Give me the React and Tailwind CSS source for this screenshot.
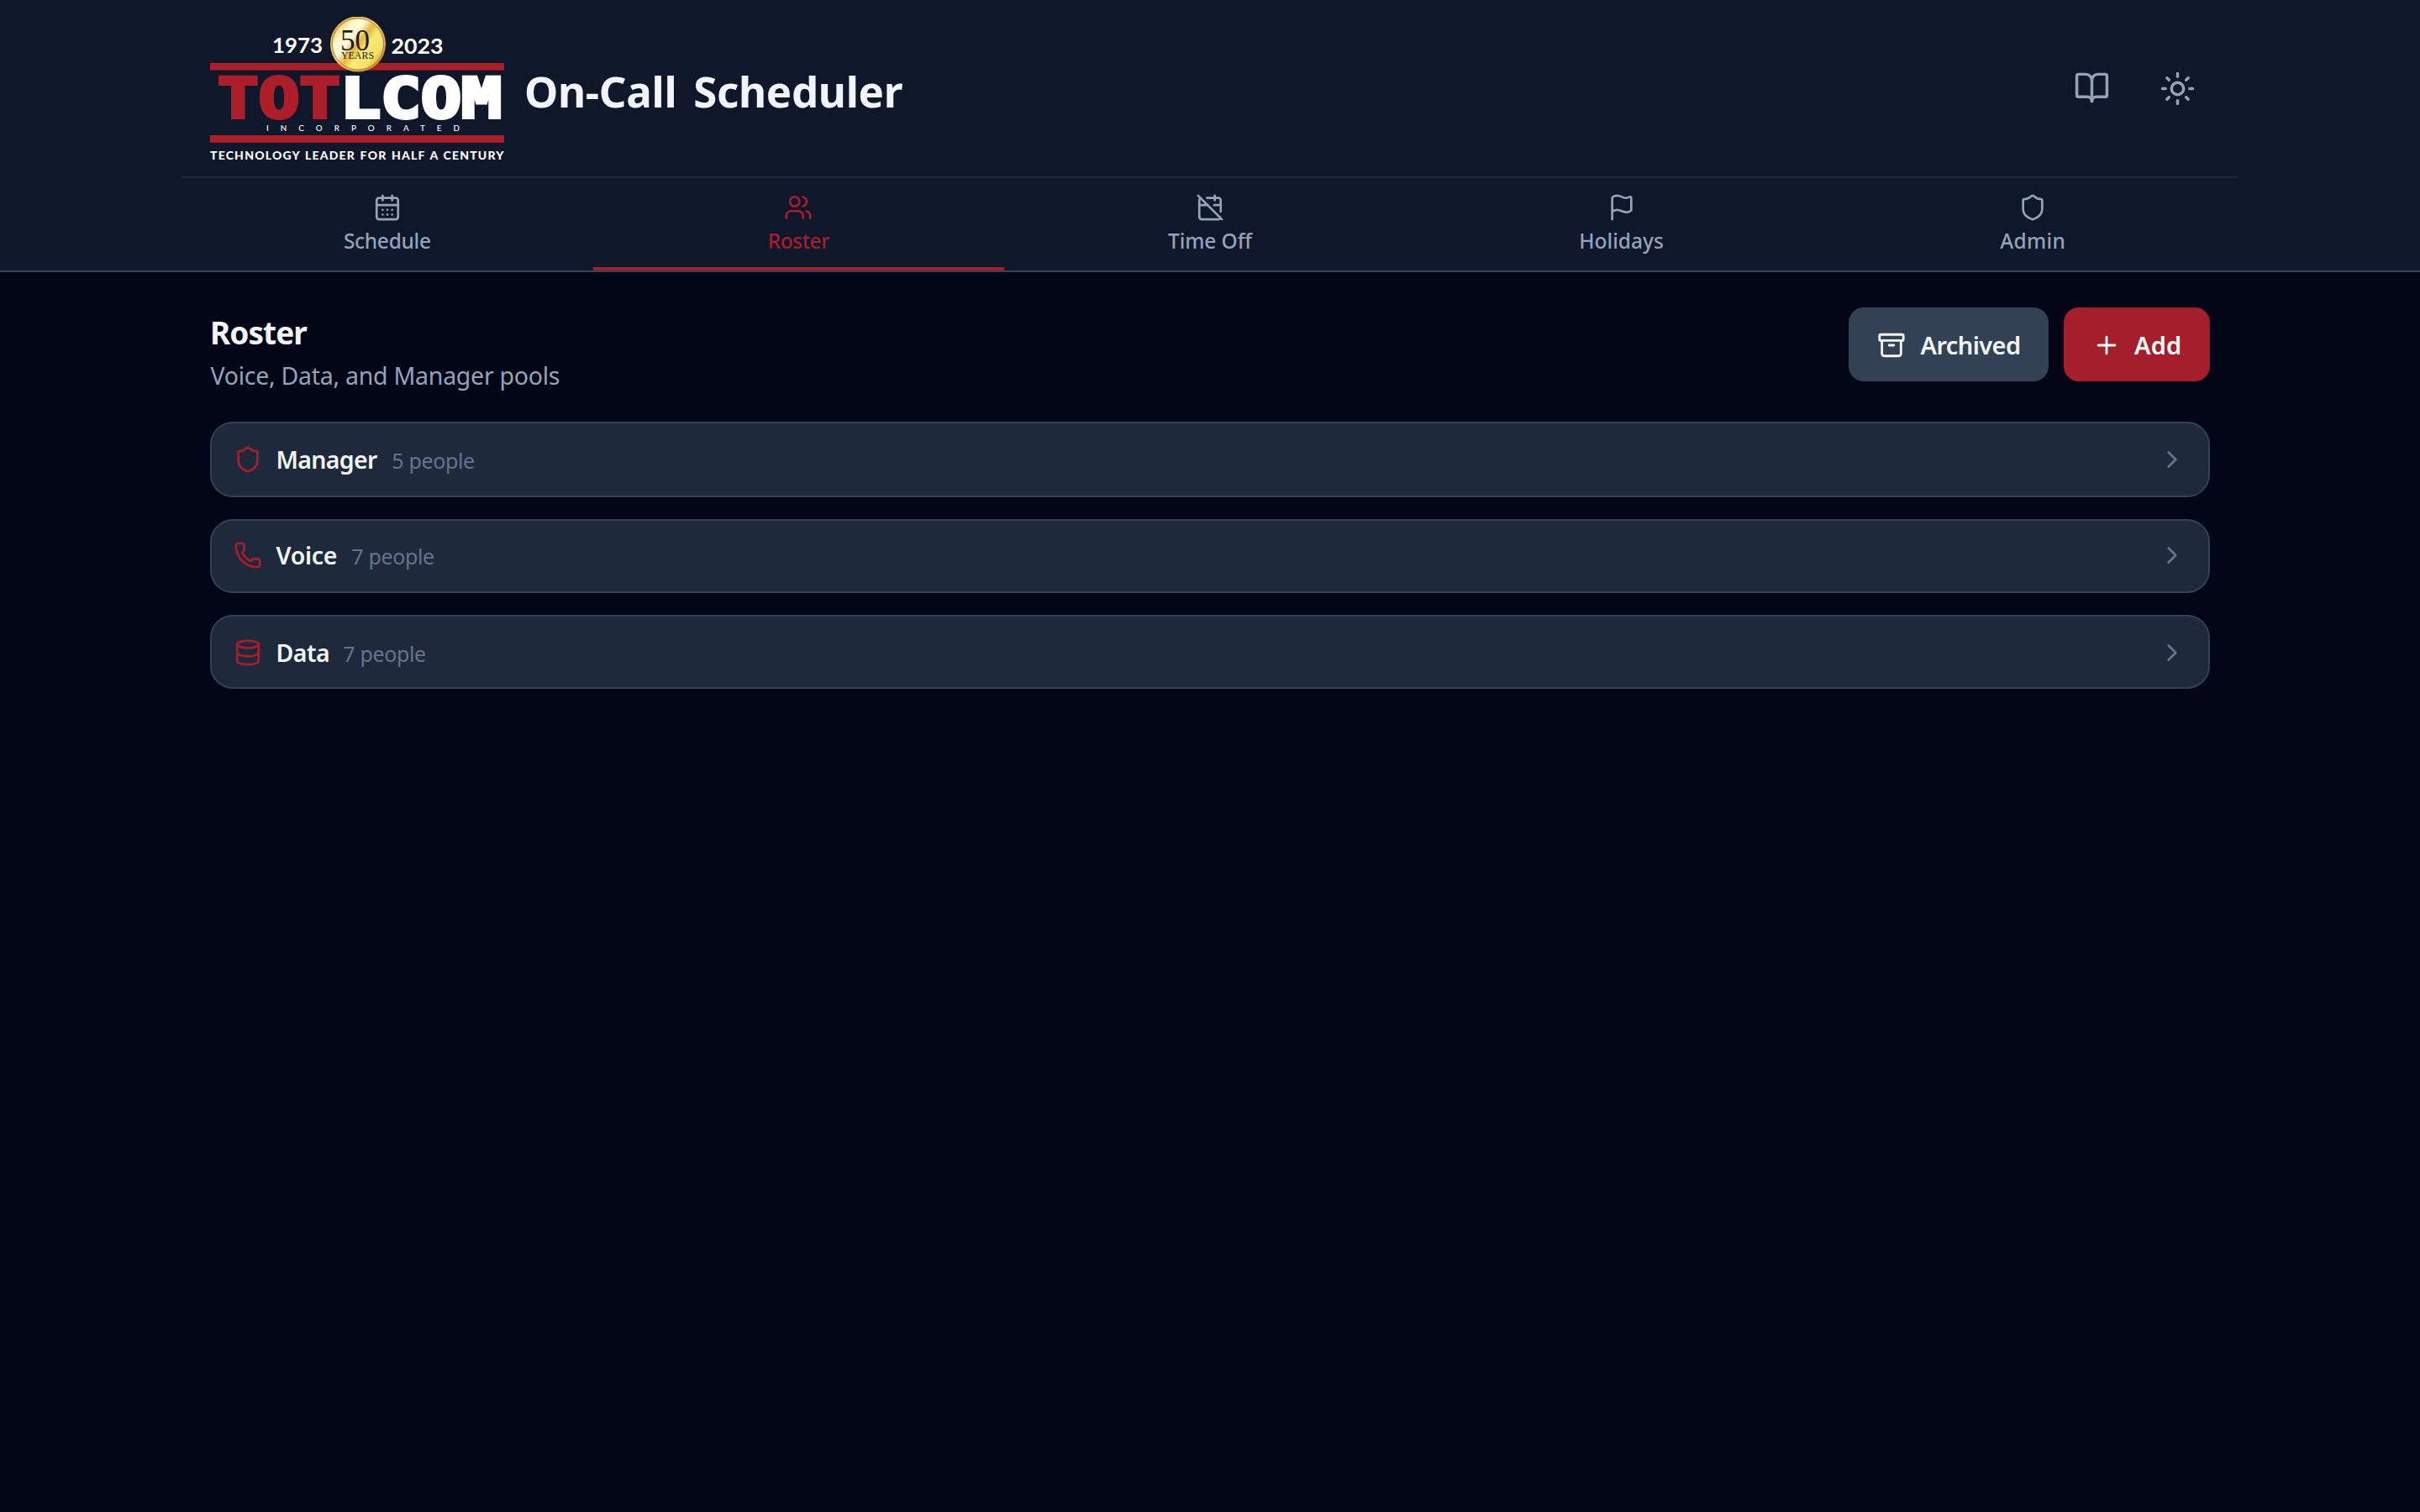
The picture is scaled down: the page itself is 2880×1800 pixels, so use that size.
import React from "react";
import {
  Archive,
  BookOpen,
  CalendarDays,
  CalendarOff,
  ChevronRight,
  Database,
  Flag,
  Phone,
  Plus,
  Shield,
  Sun,
  Users,
} from "lucide-react";

const tabs = [
  { label: "Schedule", icon: CalendarDays, tracking: "tracking-[-0.3px]" },
  { label: "Roster", icon: Users, tracking: "tracking-[-0.45px]", active: true },
  { label: "Time Off", icon: CalendarOff, tracking: "tracking-[-0.1px]" },
  { label: "Holidays", icon: Flag, tracking: "tracking-[0px]" },
  { label: "Admin", icon: Shield, tracking: "tracking-[0.3px]" },
];

const pools = [
  { name: "Manager", count: 5, icon: Shield, box: "h-[90px]", gap: "gap-[17.5px]", tracking: "tracking-[-0.66px]" },
  { name: "Voice", count: 7, icon: Phone, box: "h-[88px] pb-[2px]", gap: "gap-[17px]", tracking: "tracking-[-0.25px]" },
  { name: "Data", count: 7, icon: Database, box: "h-[88px] pt-[2px]", gap: "gap-4", tracking: "tracking-[-0.5px]" },
];

function Logo() {
  return (
    <svg viewBox="0 0 350 174" className="h-[174px] w-[350px] shrink-0" role="img" aria-label="Totlcom Incorporated">
      <defs>
        <linearGradient id="coin" x1="0" y1="0.1" x2="1" y2="0.9">
          <stop offset="0" stopColor="#e9b93c" />
          <stop offset="0.22" stopColor="#fff6c4" />
          <stop offset="0.36" stopColor="#fffbe0" />
          <stop offset="0.5" stopColor="#e3b740" />
          <stop offset="0.62" stopColor="#f8ea72" />
          <stop offset="0.8" stopColor="#f3e26a" />
          <stop offset="1" stopColor="#c98f22" />
        </linearGradient>
        <linearGradient id="rim" x1="0" y1="0" x2="1" y2="1">
          <stop offset="0" stopColor="#d99f2b" />
          <stop offset="0.45" stopColor="#f4d774" />
          <stop offset="1" stopColor="#b87d1c" />
        </linearGradient>
      </defs>
      <rect x="0" y="55" width="350" height="8.6" fill="#ac1f28" />
      <rect x="0" y="141" width="350" height="8.8" fill="#ac1f28" />
      <circle cx="176" cy="32.5" r="33" fill="url(#rim)" />
      <circle cx="176" cy="32.5" r="30.6" fill="url(#coin)" stroke="#a8741f" strokeWidth="0.9" />
      <g fontFamily="Lato, 'Liberation Sans', sans-serif" fill="#ffffff">
        <text x="74" y="42.5" fontSize="25.5" fontWeight="700" textLength="60" lengthAdjust="spacingAndGlyphs">1973</text>
        <text x="215.5" y="43.5" fontSize="25.5" fontWeight="700" textLength="62" lengthAdjust="spacingAndGlyphs">2023</text>
        <text x="67" y="135.5" fontSize="9.8" fontWeight="500" textLength="230">INCORPORATED</text>
        <text x="0" y="170" fontSize="14" fontWeight="900" textLength="349.5" wordSpacing="1">
          TECHNOLOGY LEADER FOR HALF A CENTURY
        </text>
      </g>
      <g fontFamily="'Liberation Serif', serif" fill="#1d1c14">
        <text x="155" y="39.5" fontSize="35" textLength="35" lengthAdjust="spacingAndGlyphs">50</text>
        <text x="156" y="50" fontSize="13.5" textLength="39" lengthAdjust="spacingAndGlyphs">YEARS</text>
      </g>
      <g
        fontFamily="'DejaVu Sans Mono', monospace"
        fontWeight="700"
        fontSize="65"
        strokeWidth="4"
        strokeLinejoin="miter"
      >
        <text x="9" y="120" fill="#ac1f28" stroke="#ac1f28" textLength="146" lengthAdjust="spacingAndGlyphs">TOT</text>
        <text x="155" y="120" fill="#ffffff" stroke="#ffffff" textLength="192" lengthAdjust="spacingAndGlyphs">LCOM</text>
      </g>
    </svg>
  );
}

function Tab({ label, icon: Icon, tracking, active }) {
  return (
    <button
      className={
        active
          ? "flex flex-1 flex-col items-center gap-1 border-b-4 border-[#a51e2b] pt-[18px] text-[#a51e2b]"
          : "flex flex-1 flex-col items-center gap-1 border-b-4 border-transparent pt-[18px] text-[#94a3b8]"
      }
    >
      <Icon size={34} strokeWidth={1.9} className="mb-[1px]" />
      <span className={`text-[24.5px] leading-9 font-medium ${tracking}`}>{label}</span>
    </button>
  );
}

function Pool({ name, count, icon: Icon, box, gap, tracking }) {
  return (
    <div className={`flex items-center rounded-[27px] border-2 border-[#334155] bg-[#1e293b] px-[26px] ${box}`}>
      <Icon size={34} strokeWidth={1.95} className="mr-[16.5px] shrink-0 text-[#a51e2b]" />
      <div className={`flex flex-1 items-baseline leading-10 ${gap}`}>
        <span className={`text-[28.5px] font-semibold text-[#f1f5f9] ${tracking}`}>{name}</span>
        <span className="text-[25px] tracking-[-0.35px] text-[#64748b]">{count} people</span>
      </div>
      <ChevronRight size={34} strokeWidth={2} className="text-[#64748b]" />
    </div>
  );
}

export default function App() {
  return (
    <div className="min-h-[1800px] bg-[#020617] font-['Noto_Sans','Open_Sans',sans-serif] text-[#f1f5f9]">
      <header className="h-[324px] border-b-2 border-[#334155] bg-[#0f172a]">
        <div className="mx-auto flex h-full w-[2448px] flex-col">
          <div className="flex h-[212px] shrink-0 items-start justify-between border-b-2 border-[#1e293b] px-[34px]">
            <div className="flex pt-5">
              <Logo />
              <h1 className="mt-[58px] ml-[24px] text-[51px] leading-[60px] font-bold tracking-[-0.32px] [word-spacing:7px]">
                On-Call Scheduler
              </h1>
            </div>
            <div className="flex gap-[59px] pt-[83px] pr-[17.5px] text-[#94a3b8]">
              <BookOpen size={43} strokeWidth={1.95} />
              <Sun size={43} strokeWidth={1.95} className="mt-[1px]" />
            </div>
          </div>
          <nav className="flex flex-1">
            {tabs.map((t) => (
              <Tab key={t.label} {...t} />
            ))}
          </nav>
        </div>
      </header>

      <main className="mx-auto w-[2380px] pt-[42px]">
        <div className="flex h-[136px] items-start justify-between">
          <div className="flex flex-col gap-[6.5px] pt-[4.5px]">
            <h2 className="text-[37px] leading-[50px] font-bold tracking-[-0.95px]">Roster</h2>
            <p className="ml-[0.5px] text-[28.5px] leading-10 tracking-[-0.27px] text-[#94a3b8]">Voice, Data, and Manager pools</p>
          </div>
          <div className="flex gap-[18px] text-[29px] font-semibold">
            <button className="flex h-[88px] w-[238px] items-center gap-[17.5px] rounded-[18px] bg-[#334155] pt-[2px] pl-[34px] tracking-[-0.6px]">
              <Archive size={34} strokeWidth={2} />
              Archived
            </button>
            <button className="flex h-[88px] w-[174px] items-center gap-[16px] rounded-[18px] bg-[#a51e2b] pt-[2px] pl-[34px] tracking-[0.2px] text-white">
              <Plus size={34} strokeWidth={1.95} />
              Add
            </button>
          </div>
        </div>
        <div className="flex flex-col gap-[26px]">
          {pools.map((p) => (
            <Pool key={p.name} {...p} />
          ))}
        </div>
      </main>
    </div>
  );
}
